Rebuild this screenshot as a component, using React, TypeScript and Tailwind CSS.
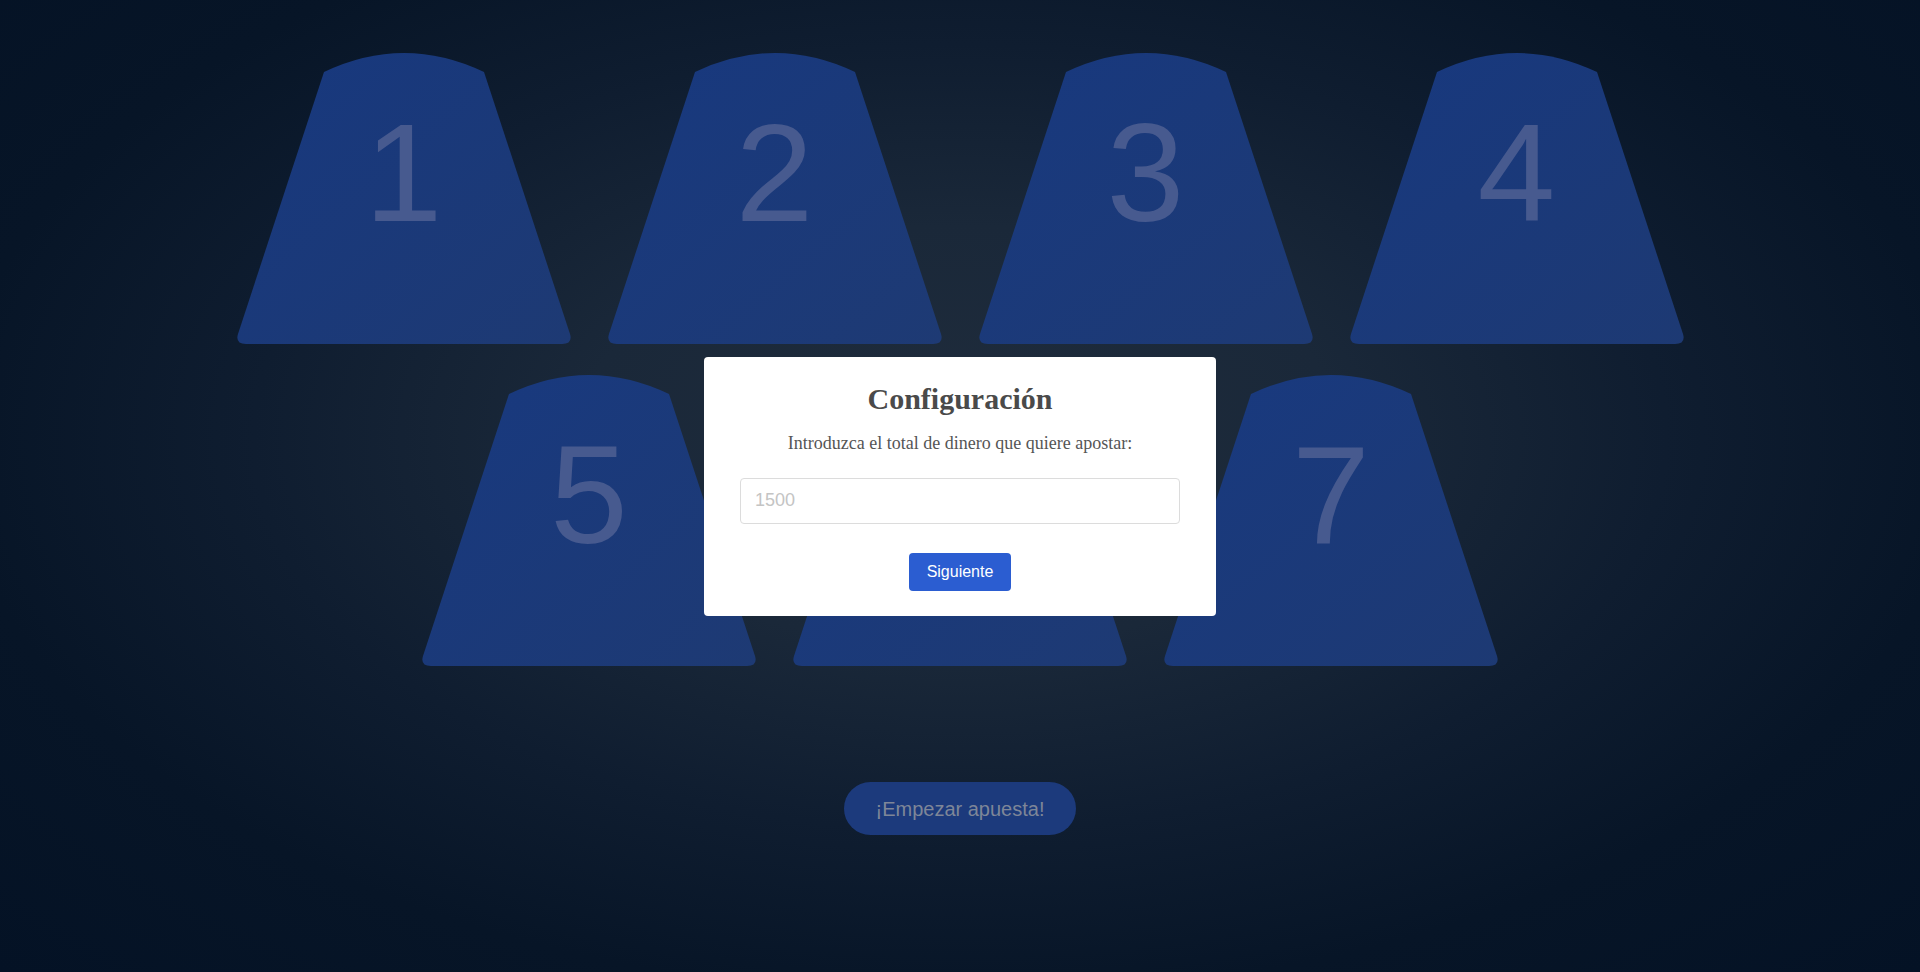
import { useState } from 'react';

const topRow = [1, 2, 3, 4];
const bottomRow = [5, 6, 7];

function Cup({ n }: { n: number }) {
  return (
    <div className="relative w-[336px] h-[291px]">
      {/* cup shape */}
      <svg className="absolute inset-0" width="336" height="291" viewBox="0 0 336 291">
        <defs>
          <linearGradient id={`cup-${n}`} x1="0" y1="0" x2="1" y2="1">
            <stop offset="0%" stopColor="#183a83" />
            <stop offset="100%" stopColor="#1e3b77" />
          </linearGradient>
        </defs>
        <path
          d="M88,19 Q128,0 168,0 Q208,0 248,19 L334,281 Q337,291 326,291 L10,291 Q-1,291 2,281 Z"
          fill={`url(#cup-${n})`}
          fillOpacity="0.95"
        />
      </svg>
      <div
        className="relative pt-[50px] text-center text-[140px] leading-none text-[#475a8f]"
        style={{ fontFamily: '"Liberation Sans", Arial, sans-serif' }}
      >
        {n}
      </div>
    </div>
  );
}

export default function App() {
  const [amount, setAmount] = useState('');

  return (
    <div
      className="h-screen w-full overflow-hidden flex flex-col items-center pt-[53px] bg-[radial-gradient(ellipse_at_50%_45%,#1f2c3c_0%,#1a2839_28%,#0f1d30_52%,#071527_74%,#041225_100%)]"
      style={{ fontFamily: '"Liberation Sans", Arial, sans-serif' }}
    >
      {/* cups */}
      <div className="flex flex-col items-center gap-[31px]">
        <div className="flex gap-[35px]">
          {topRow.map((n) => (
            <Cup key={n} n={n} />
          ))}
        </div>
        <div className="flex gap-[35px]">
          {bottomRow.map((n) => (
            <Cup key={n} n={n} />
          ))}
        </div>
      </div>

      <button className="mt-[116px] h-[53px] px-8 rounded-full bg-[#1c3a7c] text-[20px] text-[#7e8698]">
        ¡Empezar apuesta!
      </button>

      {/* settings modal */}
      <div className="fixed inset-0 flex items-center justify-center">
        <div className="w-[512px] rounded-[4px] bg-white px-[36px] pt-[24px] pb-[25px] flex flex-col items-center">
          <h2
            className="text-[30px] leading-[36px] font-bold text-[#4a4a4a]"
            style={{ fontFamily: '"Liberation Serif", "Times New Roman", serif' }}
          >
            Configuración
          </h2>
          <p
            className="mt-[15px] text-[18px] leading-[22px] text-[#555]"
            style={{ fontFamily: '"Liberation Serif", "Times New Roman", serif' }}
          >
            Introduzca el total de dinero que quiere apostar:
          </p>
          <input
            type="number"
            value={amount}
            onChange={(e) => setAmount(e.target.value)}
            placeholder="1500"
            className="mt-[24px] w-full h-[46px] rounded-[4px] border border-[#dcdcdc] px-[14px] text-[18px] text-[#333] placeholder:text-[#c4c4c4] outline-none"
          />
          <button className="mt-[29px] h-[38px] px-[18px] rounded-[4px] bg-[#2b5dd1] text-white text-[16px] leading-[18px]">
            Siguiente
          </button>
        </div>
      </div>
    </div>
  );
}
